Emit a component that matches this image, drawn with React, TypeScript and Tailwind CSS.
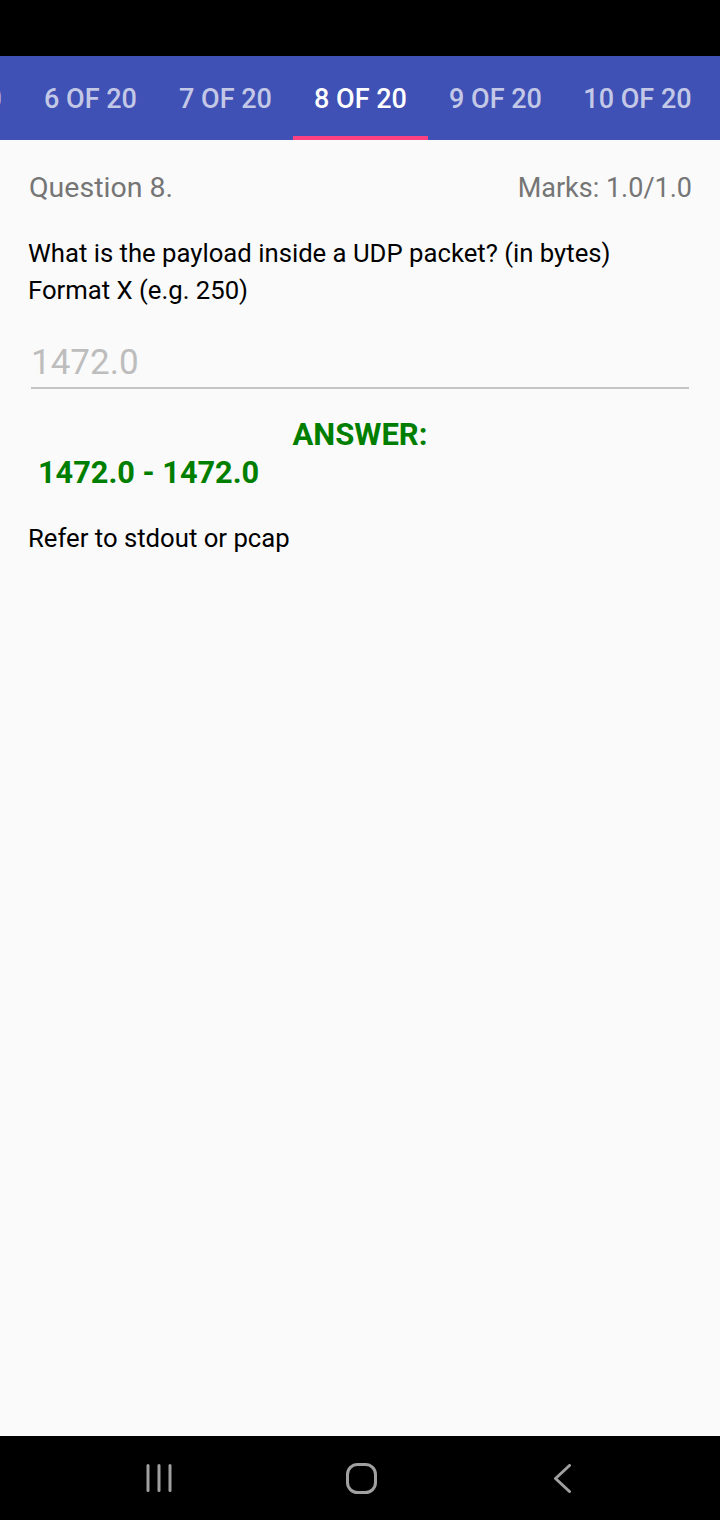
import React from 'react';

const tabs = [
  { label: '5 OF 20', w: 'w-[135px]' },
  { label: '6 OF 20', w: 'w-[135px]' },
  { label: '7 OF 20', w: 'w-[135px]' },
  { label: '8 OF 20', w: 'w-[135px]', active: true },
  { label: '9 OF 20', w: 'w-[135px]' },
  { label: '10 OF 20', w: 'w-[149px]' },
  { label: '11 OF 20', w: 'w-[149px]' },
];

const App: React.FC = () => {
  return (
    <div className="w-[720px] h-[1520px] flex flex-col bg-[#fafafa] font-['Roboto',sans-serif] overflow-hidden">
      <div className="h-[56px] bg-black shrink-0" />

      {/* tab strip, scrolled so the current question sits in the middle */}
      <div className="h-[84px] bg-[#3f51b5] shrink-0 flex overflow-hidden">
        <div className="flex shrink-0 -ml-[112px]">
          {tabs.map((t) => (
            <div key={t.label} className={`${t.w} shrink-0 relative flex items-center justify-center pt-[2px]`}>
              <span className={`text-[27px] font-medium ${t.active ? 'text-white' : 'text-white/70'}`}>
                {t.label}
              </span>
              {t.active && <div className="absolute bottom-0 left-0 right-0 h-[4px] bg-[#ff4081]" />}
            </div>
          ))}
        </div>
      </div>

      <div className="flex-1 px-[28px] pt-[27px]">
        <div className="flex justify-between items-baseline text-[#757575]">
          <span className="text-[28.5px] pl-[1px]">Question 8.</span>
          <span className="text-[27px]">Marks: 1.0/1.0</span>
        </div>

        <p className="mt-[25px] text-[25.7px] leading-[37px] text-black">
          What is the payload inside a UDP packet? (in bytes)
          <br />
          Format X (e.g. 250)
        </p>

        <div className="mt-[31px] mx-[3px] border-b-2 border-[#c4c4c4] pb-[1px]">
          <span className="text-[35px] text-[#bdbdbd] leading-[46px]">1472.0</span>
        </div>

        <div className="mt-[27px] text-center text-[31px] font-bold text-[#007e00] leading-[38px]">ANSWER:</div>
        <div className="pl-[10px] text-[30.7px] font-bold text-[#007e00] leading-[38px]">1472.0 - 1472.0</div>

        <p className="mt-[29px] text-[25.7px] text-black leading-[34px]">Refer to stdout or pcap</p>
      </div>

      {/* system navigation bar */}
      <div className="h-[84px] bg-black shrink-0 grid grid-cols-3 items-center px-[59px]">
        <div className="flex justify-center">
          <svg width="26" height="28" viewBox="0 0 26 28">
            <g stroke="#a0a0a0" strokeWidth="3" strokeLinecap="round">
              <line x1="2" y1="1.5" x2="2" y2="26.5" />
              <line x1="13" y1="1.5" x2="13" y2="26.5" />
              <line x1="24" y1="1.5" x2="24" y2="26.5" />
            </g>
          </svg>
        </div>
        <div className="flex justify-center pl-[3px]">
          <svg width="31" height="31" viewBox="0 0 31 31">
            <rect x="1.5" y="1.5" width="28" height="28" rx="10" fill="none" stroke="#a0a0a0" strokeWidth="3" />
          </svg>
        </div>
        <div className="flex justify-center pl-[3px]">
          <svg width="17" height="29" viewBox="0 0 17 29">
            <polyline points="15.5,1.5 1.5,14.5 15.5,27.5" fill="none" stroke="#a0a0a0" strokeWidth="3" strokeLinecap="round" strokeLinejoin="round" />
          </svg>
        </div>
      </div>
    </div>
  );
};

export default App;
